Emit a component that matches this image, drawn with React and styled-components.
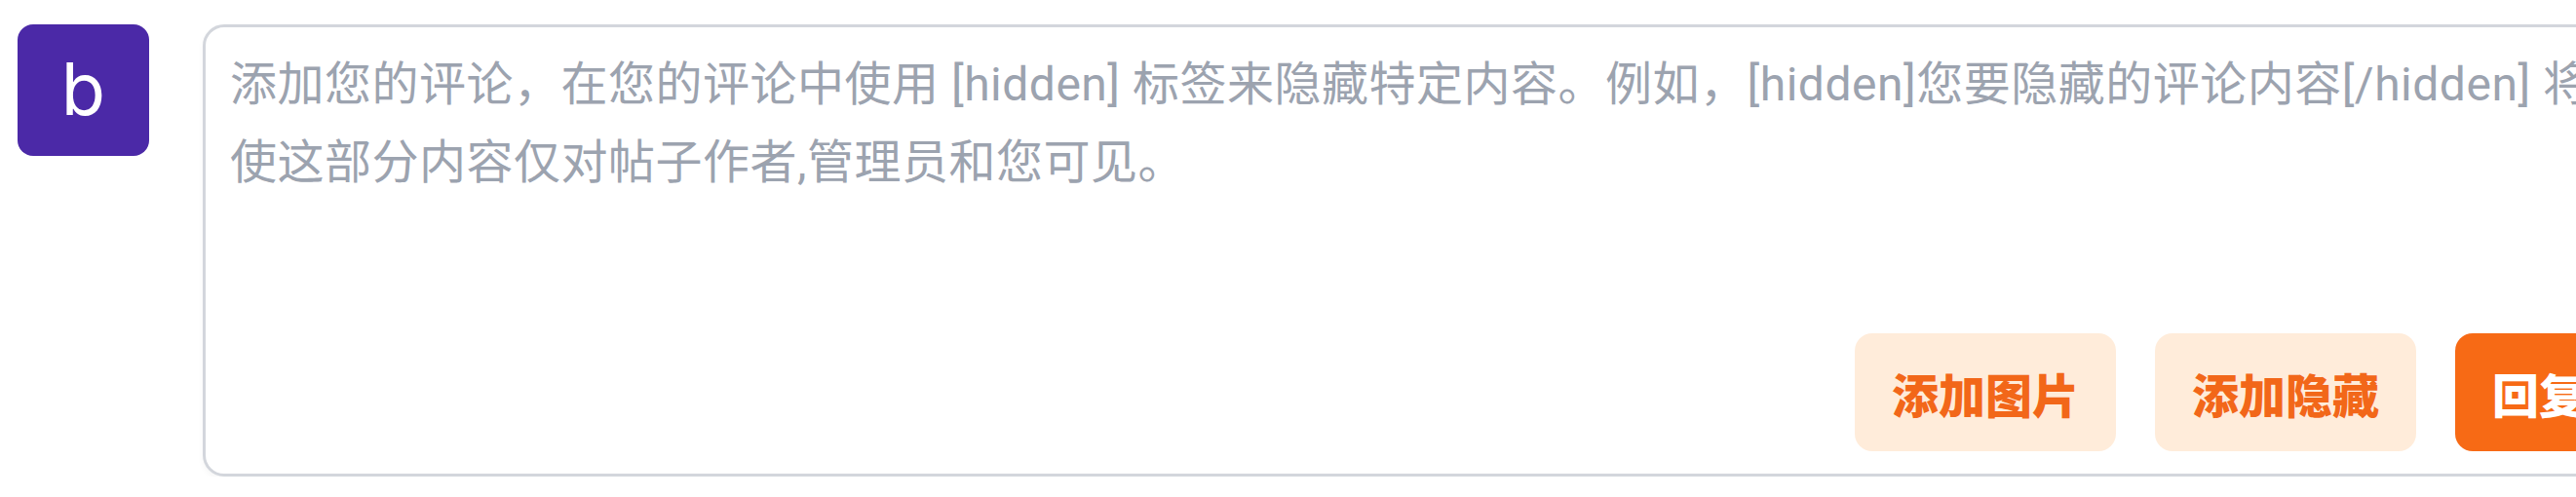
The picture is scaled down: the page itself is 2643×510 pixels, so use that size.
import React, { useState } from 'react';
import styled, { createGlobalStyle } from 'styled-components';

const GlobalStyle = createGlobalStyle`
  html, body {
    margin: 0;
    padding: 0;
    background-color: #fff;
    overflow: hidden;
  }
  body {
    font-family: Inter, "Noto Sans CJK SC", sans-serif;
  }
`;

const CommentRow = styled.div`
  display: flex;
  align-items: flex-start;
  gap: 55px;
  padding: 25px 0 0 18px;
  width: 2720px;
`;

const Avatar = styled.div`
  flex-shrink: 0;
  width: 135px;
  height: 135px;
  border-radius: 16px;
  background-color: #4b29a7;
  color: #fff;
  display: flex;
  align-items: center;
  justify-content: center;
  font-family: Inter, sans-serif;
  font-size: 74px;
  line-height: 1;
  padding-bottom: 4px;
  box-sizing: border-box;
`;

const Editor = styled.div`
  width: 2510px;
  height: 464px;
  box-sizing: border-box;
  border: 3px solid #d3d6dc;
  border-radius: 22px;
  box-shadow: 0 3px 6px rgba(0, 0, 0, 0.04);
  background-color: #fff;
  padding: 19px 24px 23px 25px;
  display: flex;
  flex-direction: column;
`;

const TextArea = styled.textarea`
  flex: 1;
  width: calc(100% - 18px);
  border: none;
  outline: none;
  resize: none;
  padding: 0;
  margin: 0;
  background: transparent;
  font-family: Roboto, "Noto Sans CJK SC", sans-serif;
  font-size: 48px;
  line-height: 80px;
  letter-spacing: 0.5px;
  color: #374151;

  &::placeholder {
    color: #9ca3af;
    opacity: 1;
  }
`;

const Actions = styled.div`
  display: flex;
  justify-content: flex-end;
  gap: 40px;
  margin-top: 15px;
`;

const ActionButton = styled.button`
  height: 121px;
  padding: 0 38px;
  border: none;
  border-radius: 18px;
  font-family: "Noto Sans CJK SC", sans-serif;
  font-size: 48px;
  font-weight: 900;
  cursor: pointer;
  background-color: ${(p) => (p.$primary ? '#f76a15' : '#ffecda')};
  color: ${(p) => (p.$primary ? '#fff' : '#f26719')};
`;

function App() {
  const [content, setContent] = useState('');

  return (
    <>
      <GlobalStyle />
      <CommentRow>
        <Avatar>b</Avatar>
        <Editor>
          <TextArea
            spellCheck="false"
            placeholder='添加您的评论，在您的评论中使用 [hidden] 标签来隐藏特定内容。例如，[hidden]您要隐藏的评论内容[/hidden] 将使这部分内容仅对帖子作者,管理员和您可见。'
            value={content}
            onChange={(e) => setContent(e.target.value)}
          />
          <Actions>
            <ActionButton type='button'>添加图片</ActionButton>
            <ActionButton type='button'>添加隐藏</ActionButton>
            <ActionButton type='button' $primary>回复</ActionButton>
          </Actions>
        </Editor>
      </CommentRow>
    </>
  );
}

export default App;
